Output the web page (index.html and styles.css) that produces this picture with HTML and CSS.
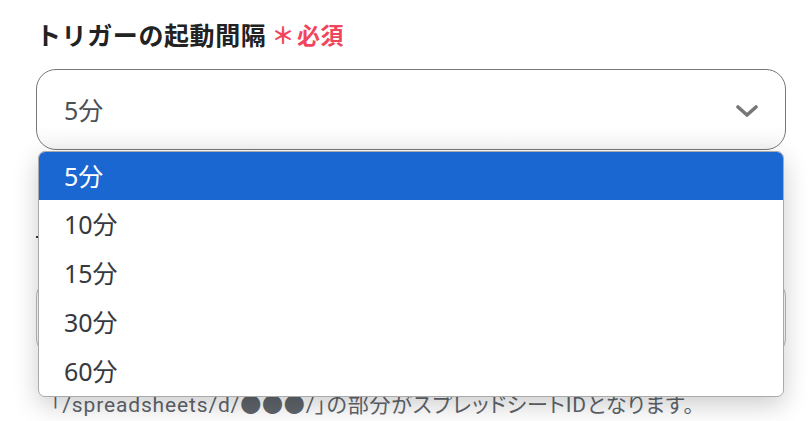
FILE: index.html
```html
<!DOCTYPE html>
<html lang="ja">
<head>
<meta charset="utf-8">
<link rel="stylesheet" href="styles.css">
</head>
<body>
<div class="form">
  <div class="label">トリガーの起動間隔<span class="req"><span class="ast">＊</span>必須</span></div>
  <div class="field">
    <div class="select">
      <span class="value">5分</span>
      <svg class="chev" width="22" height="12" viewBox="0 0 22 12"><polyline points="2,2 11,10 20,2" fill="none" stroke="#777" stroke-width="3.6" stroke-linecap="round" stroke-linejoin="round"/></svg>
    </div>
    <ul class="menu">
      <li class="opt active">5分</li>
      <li class="opt">10分</li>
      <li class="opt">15分</li>
      <li class="opt">30分</li>
      <li class="opt">60分</li>
    </ul>
  </div>
  <div class="label2"><span class="mark"></span></div>
  <div class="input"></div>
  <p class="help">「/spreadsheets/d/●●●/」の部分がスプレッドシートIDとなります。</p>
</div>
</body>
</html>
```

FILE: styles.css
```css
html, body {
  margin: 0;
  padding: 0;
  background: #fff;
  overflow: hidden;
}
body {
  font-family: "Noto Sans", "Noto Sans CJK JP", sans-serif;
  width: 811px;
  height: 421px;
}
.form {
  padding: 17px 25px 0 36px;
}
.label {
  font-size: 25px;
  font-weight: 700;
  letter-spacing: 0.6px;
  line-height: 36px;
  color: #222;
  display: flex;
  align-items: center;
}
.req {
  color: #f0455a;
  font-size: 23px;
  margin-left: 7px;
  letter-spacing: 0.5px;
  display: flex;
  align-items: center;
}
.ast {
  font-size: 23px;
  margin-right: 2px;
  margin-left: -2px;
}
.field {
  position: relative;
  margin-top: 16px;
}
.select {
  box-sizing: border-box;
  height: 81px;
  border: 1px solid #777;
  border-radius: 20px;
  display: flex;
  align-items: center;
  justify-content: space-between;
  padding: 0 27px 0 27px;
  background: linear-gradient(#fff 70%, #f6f6f6);
}
.value {
  font-size: 25px;
  color: #4b5057;
  margin-top: -2px;
}
.chev {
  margin-top: 3px;
}
.menu {
  position: absolute;
  top: 82px;
  left: 2px;
  right: 2px;
  margin: 0;
  padding: 0;
  list-style: none;
  background: #fff;
  border: 1px solid #aaa;
  border-radius: 7px;
  overflow: hidden;
  box-shadow: 0 8px 26px rgba(0, 0, 0, 0.2);
  z-index: 2;
}
.opt {
  height: 49px;
  line-height: 49px;
  font-size: 25px;
  color: #363a40;
  padding-left: 25px;
}
.opt.active {
  background: #1a67d2;
  color: #fff;
  height: 48px;
  line-height: 48px;
}
.label2 {
  margin-top: 69px;
  height: 36px;
  display: flex;
  align-items: center;
}
.mark {
  width: 4px;
  height: 2px;
  background: #333;
}
.input {
  box-sizing: border-box;
  height: 81px;
  margin-top: 22px;
  border: 1px solid #bbb;
  border-radius: 20px;
}
.help {
  margin: 33px 0 0 15px;
  font-family: Roboto, "Noto Sans CJK JP", sans-serif;
  font-size: 21px;
  font-feature-settings: "palt";
  letter-spacing: 0.85px;
  color: #5f656c;
  line-height: 28px;
}
```
